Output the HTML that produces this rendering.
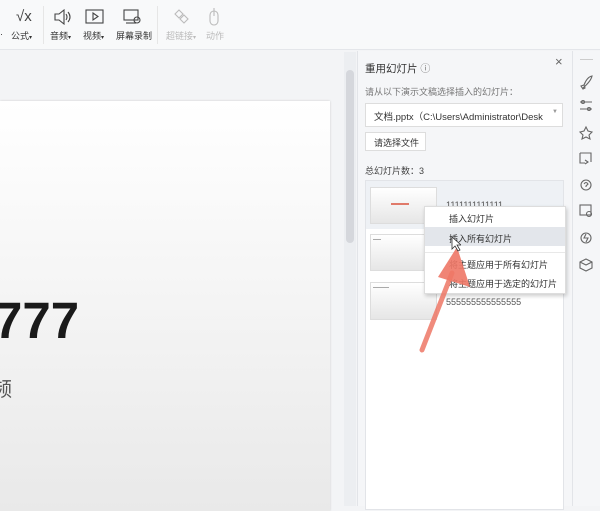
<!DOCTYPE html>
<html><head><meta charset="utf-8"><style>
*{margin:0;padding:0;box-sizing:border-box}
body{width:600px;height:506px;overflow:hidden;background:#f3f4f6;font-family:"Liberation Sans","Noto Sans CJK SC",sans-serif;position:relative;color:#333}
.a{position:absolute}
.t{font-size:9px;color:#333;white-space:nowrap}
.ico{stroke:#444;fill:none;stroke-width:1.1}
.g{stroke:#bbb}
.ri{stroke:#666;fill:none;stroke-width:1.1}
</style></head><body>
<div class="a" style="left:0;top:0;width:600px;height:50px;background:#f8f9fa;border-bottom:1px solid #e4e6ea"></div>
<div class="a t" style="left:0;top:29px">·</div>
<div class="a" style="left:16px;top:8px;font-size:15px;color:#444">√x</div>
<div class="a t" style="left:11px;top:29px">公式<span style="font-size:6px">▾</span></div>
<div class="a" style="left:43px;top:6px;width:1px;height:38px;background:#e6e6e6"></div>
<svg class="a" style="left:52px;top:8px" width="20" height="18"><path class="ico" d="M3 6h4l5-4v14l-5-4H3z M14 6q2 3 0 6 M16 4q4 5 0 10"/></svg>
<div class="a t" style="left:50px;top:29px">音频<span style="font-size:6px">▾</span></div>
<svg class="a" style="left:85px;top:8px" width="20" height="18"><rect class="ico" x="1" y="2" width="17" height="13"/><path class="ico" d="M8 5l5 3.5-5 3.5z"/></svg>
<div class="a t" style="left:83px;top:29px">视频<span style="font-size:6px">▾</span></div>
<svg class="a" style="left:122px;top:8px" width="20" height="18"><rect class="ico" x="2" y="2" width="14" height="10"/><path class="ico" d="M4 15h10"/><circle class="ico" cx="15" cy="12" r="3"/></svg>
<div class="a t" style="left:116px;top:29px">屏幕录制</div>
<div class="a" style="left:157px;top:6px;width:1px;height:38px;background:#e6e6e6"></div>
<svg class="a" style="left:172px;top:8px" width="18" height="18"><path class="ico g" d="M3 6l4-4 4 4-4 4z M8 11l4-4 4 4-4 4z"/></svg>
<div class="a t" style="left:166px;top:29px;color:#bbb">超链接<span style="font-size:6px">▾</span></div>
<svg class="a" style="left:207px;top:7px" width="14" height="20"><path class="ico g" d="M3 8a4 4 0 0 1 8 0v6a4 4 0 0 1-8 0z M7 4v5 M7 1v3"/></svg>
<div class="a t" style="left:206px;top:29px;color:#bbb">动作</div>
<div class="a" style="left:0;top:101px;width:330px;height:410px;background:linear-gradient(#fff,#e9e9e9);box-shadow:0 0 2px #ccc"></div>
<div class="a" style="left:-6px;top:291px;font-size:51px;font-weight:bold;color:#1a1a1a">777</div>
<div class="a" style="left:-8px;top:373px;font-size:20px;color:#555">频</div>
<div class="a" style="left:344px;top:52px;width:12px;height:454px;background:#eceef1"></div>
<div class="a" style="left:346px;top:70px;width:8px;height:173px;background:#d5d7dc;border-radius:4px"></div>
<div class="a" style="left:357px;top:51px;width:215px;height:455px;background:#f5f6f8;border-left:1px solid #e2e4e8"></div>
<div class="a" style="left:365px;top:60px;font-size:10.5px;color:#333">重用幻灯片 <span style="font-size:10px;color:#777">ⓘ</span></div>
<div class="a" style="left:555px;top:54px;font-size:13px;color:#666">×</div>
<div class="a t" style="left:365px;top:85px;color:#777">请从以下演示文稿选择插入的幻灯片：</div>
<div class="a" style="left:365px;top:103px;width:198px;height:24px;background:#fff;border:1px solid #ddd"></div>
<div class="a t" style="left:374px;top:109px;font-size:9.5px">文档.pptx（C:\Users\Administrator\Desk</div>
<div class="a" style="left:552px;top:109px;font-size:6px;color:#999">▼</div>
<div class="a" style="left:365px;top:132px;width:61px;height:19px;background:#fff;border:1px solid #ddd"></div>
<div class="a t" style="left:374px;top:136px">请选择文件</div>
<div class="a t" style="left:365px;top:164px;color:#444">总幻灯片数：3</div>
<div class="a" style="left:365px;top:180px;width:199px;height:330px;background:#fff;border:1px solid #e2e4e8"></div>
<div class="a" style="left:366px;top:181px;width:197px;height:48px;background:#eef1f5"></div>
<div class="a" style="left:370px;top:187px;width:67px;height:37px;background:linear-gradient(#fff,#e6e6e6);border:1px solid #ddd"></div>
<div class="a" style="left:391px;top:203px;width:18px;height:1.5px;background:#e07a6a"></div>
<div class="a t" style="left:446px;top:200px;color:#555">1111111111111</div>
<div class="a" style="left:370px;top:234px;width:67px;height:37px;background:linear-gradient(#fff,#e6e6e6);border:1px solid #ddd"></div>
<div class="a" style="left:373px;top:239px;width:8px;height:1px;background:#aaa"></div>
<div class="a" style="left:370px;top:282px;width:67px;height:38px;background:linear-gradient(#fff,#e6e6e6);border:1px solid #ddd"></div>
<div class="a" style="left:373px;top:287px;width:16px;height:1px;background:#aaa"></div>
<div class="a t" style="left:446px;top:297px;color:#555">555555555555555</div>
<div class="a" style="left:424px;top:206px;width:142px;height:88px;background:#fff;border:1px solid #ddd;box-shadow:1px 2px 4px rgba(0,0,0,.2)"></div>
<div class="a" style="left:425px;top:227px;width:140px;height:19px;background:#e3e6eb"></div>
<div class="a" style="left:425px;top:252px;width:140px;height:1px;background:#e8e8e8"></div>
<div class="a t" style="left:449px;top:212px">插入幻灯片</div>
<div class="a t" style="left:449px;top:232px">插入所有幻灯片</div>
<div class="a t" style="left:449px;top:258px">将主题应用于所有幻灯片</div>
<div class="a t" style="left:449px;top:277px">将主题应用于选定的幻灯片</div>
<svg class="a" style="left:410px;top:235px" width="60" height="120"><path d="M12 115L42 38" stroke="#ee7766" stroke-width="5" stroke-linecap="round" opacity=".85"/><path d="M47 12L60 52 28 42z" fill="#ee7766" opacity=".9"/></svg>
<svg class="a" style="left:451px;top:236px" width="10" height="16"><path d="M1 1v12l3-3 3 5 2-1-3-5h4z" fill="#fff" stroke="#333" stroke-width=".8"/></svg>
<div class="a" style="left:572px;top:51px;width:28px;height:455px;background:#f5f6f8;border-left:1px solid #e2e4e8"></div>
<div class="a" style="left:580px;top:59px;width:13px;height:1px;background:#ccc"></div>
<svg class="a" style="left:578px;top:74px" width="16" height="200">
<path class="ri" d="M3 12l3-1 1 3-2 1z M6 11q3-8 8-9-1 5-9 12"/>
<path class="ri" d="M2 28h12 M2 35h12"/><circle class="ri" cx="5" cy="28" r="1.5"/><circle class="ri" cx="11" cy="35" r="1.5"/>
<path class="ri" d="M8 53l2 4 4 1-3 3 1 4-4-2-4 2 1-4-3-3 4-1z"/>
<path class="ri" d="M2 79h11v9 M2 79v10h5 M7 86l3 2-3 2"/>
<circle class="ri" cx="8" cy="111" r="5"/><path class="ri" d="M6 110q2-3 4 0l-2 2v1"/>
<rect class="ri" x="2" y="131" width="11" height="10"/><circle class="ri" cx="11" cy="140" r="2.5"/>
<circle class="ri" cx="8" cy="164" r="5"/><path class="ri" d="M8 160l-2 4h4l-2 4"/>
<path class="ri" d="M2 188l6-3 6 3v6l-6 3-6-3z M2 188l6 3 6-3"/>
</svg>
</body></html>
